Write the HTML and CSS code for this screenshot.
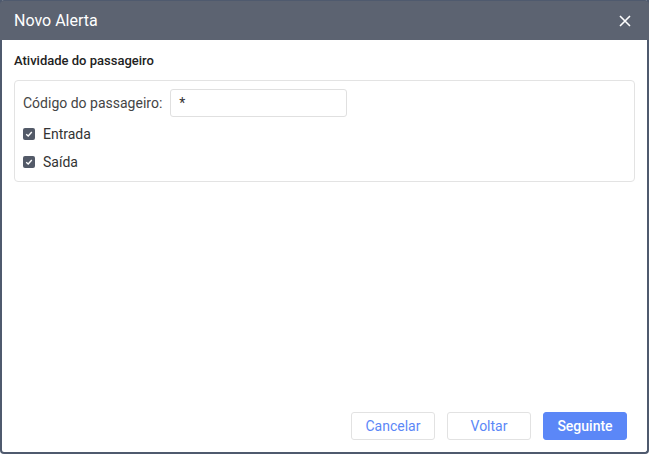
FILE: index.html
```html
<!DOCTYPE html>
<html>
<head>
<meta charset="utf-8">
<link rel="stylesheet" href="styles.css">
</head>
<body>
<div class="dialog">
  <div class="header">
    <span class="title">Novo Alerta</span>
    <svg class="close" width="12" height="12" viewBox="0 0 12 12"><path d="M1 1L11 11M11 1L1 11" stroke="#fff" stroke-width="1.6"/></svg>
  </div>
  <div class="body">
    <div class="section-title">Atividade do passageiro</div>
    <div class="panel">
      <div class="row">
        <span class="label">Código do passageiro:</span>
        <div class="input">*</div>
      </div>
      <div class="check first">
        <span class="box"><svg width="8" height="8" viewBox="0 0 8 8"><path d="M1.2 4.2L3.2 6L6.8 2" stroke="#fff" stroke-width="1.4" fill="none"/></svg></span>
        <span>Entrada</span>
      </div>
      <div class="check">
        <span class="box"><svg width="8" height="8" viewBox="0 0 8 8"><path d="M1.2 4.2L3.2 6L6.8 2" stroke="#fff" stroke-width="1.4" fill="none"/></svg></span>
        <span>Saída</span>
      </div>
    </div>
  </div>
  <div class="footer">
    <button class="btn">Cancelar</button>
    <button class="btn">Voltar</button>
    <button class="btn primary">Seguinte</button>
  </div>
</div>
</body>
</html>
```
FILE: styles.css
```css
html, body { margin: 0; padding: 0; }
body { width: 649px; height: 454px; font-family: Roboto, "Noto Sans", sans-serif; background: #fff; }
.dialog {
  box-sizing: border-box;
  width: 649px; height: 454px;
  border: 2px solid #4f5a6e;
  border-top: none;
  border-radius: 0 0 4px 4px;
  display: flex; flex-direction: column;
  background: #fff;
}
.header {
  height: 40px; margin: 0 -2px;
  background: #5c6371;
  border-radius: 4px 4px 0 0;
  display: flex; align-items: center; justify-content: space-between;
  padding: 0 18px 0 14px;
  border-top: 1px solid #4f5a6e;
  box-sizing: border-box;
}
.title { color: #fff; font-size: 16px; }
.body { flex: 1; padding: 12px 12px 0 12px; }
.section-title { font-size: 13px; font-weight: 500; color: #222; height: 28px; line-height: 18px; }
.panel {
  border: 1px solid #e3e3e3; border-radius: 4px;
  padding: 8px 8px 5px 8px;
  display: flex; flex-direction: column;
  color: #333; font-size: 14px;
}
.row { display: flex; align-items: center; gap: 8px; }
.label { color: #444; }
.input {
  width: 155px; height: 26px; border: 1px solid #e0e0e0; border-radius: 3px;
  padding: 0 12px 0 8px; line-height: 26px; color: #333;
}
.check { display: flex; align-items: center; gap: 8px; height: 28px; }
.check.first { margin-top: 3px; }
.box {
  width: 12px; height: 12px; background: #535a68; border-radius: 2px;
  display: flex; align-items: center; justify-content: center;
}
.footer { display: flex; justify-content: flex-end; gap: 12px; padding: 0 20px 12px 0; }
.btn {
  width: 84px; height: 28px; border: 1px solid #e2e2e2; border-radius: 3px; background: #fff;
  color: #5b87f7; font-family: Roboto, sans-serif; font-size: 14px; padding: 0;
}
.btn.primary { background: #5b87f7; border-color: #5b87f7; color: #fff; font-weight: 500; }
```
